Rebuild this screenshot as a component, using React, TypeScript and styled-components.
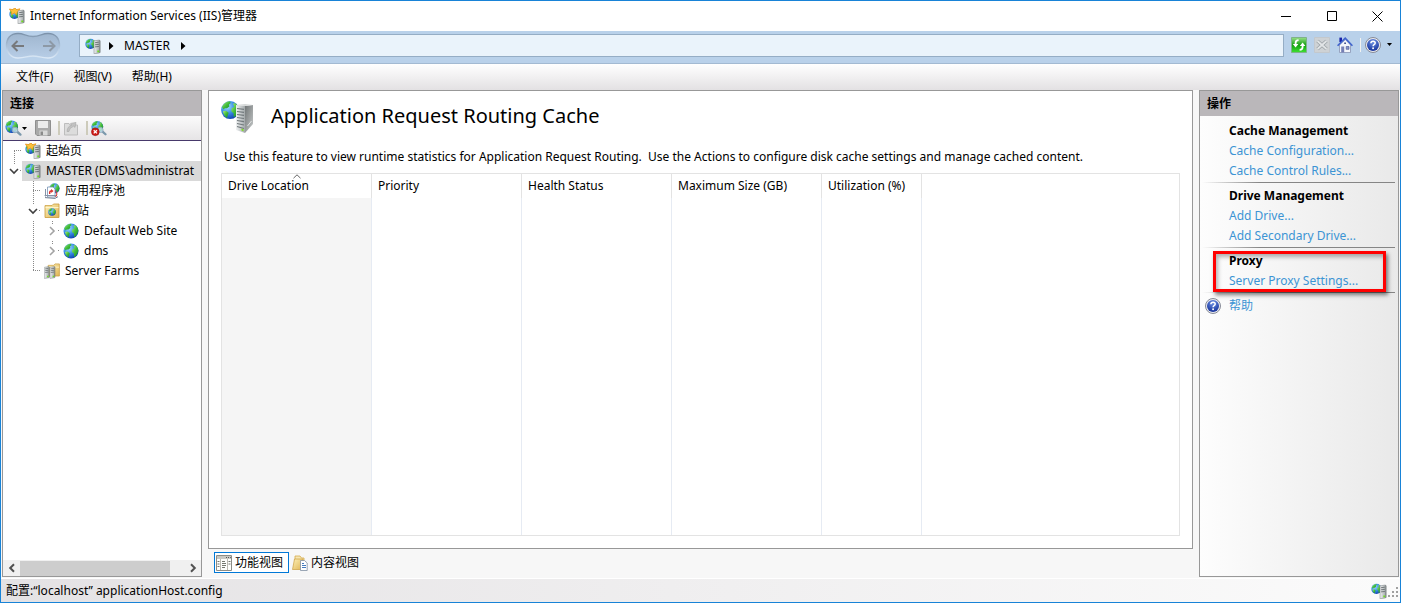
import React from "react";
import styled, { createGlobalStyle } from "styled-components";

const GlobalStyle = createGlobalStyle`
  * { box-sizing: border-box; }
  body {
    margin: 0;
    background: #f7f7f7;
    color: #000;
    font-family: "Noto Sans", "Noto Sans CJK SC", sans-serif;
    font-size: 12px;
    line-height: 20px;
  }
  button { font: inherit; color: inherit; }
`;

const Window = styled.div`
  height: 100vh;
  min-height: 400px;
  display: flex;
  flex-direction: column;
  border: 1px solid #1883d7;
  background: #f7f7f7;
  overflow: hidden;
  white-space: nowrap;
`;

const TitleBar = styled.header`
  flex: none;
  height: 30px;
  display: flex;
  align-items: center;
  gap: 5px;
  padding: 0 2px 0 8px;
  background: #fff;
`;

const WindowTitle = styled.h1`
  margin: 0;
  flex: 1;
  font-size: 12px;
  font-weight: 400;
`;

const IconButton = styled.button<{ $w?: number }>`
  display: flex;
  align-items: center;
  justify-content: center;
  flex: none;
  width: ${(p) => p.$w ?? 16}px;
  height: 24px;
  padding: 0;
  border: 0;
  background: none;
`;

const AddressBar = styled.nav`
  flex: none;
  height: 33px;
  display: flex;
  align-items: center;
  padding: 0 8px 3px 4px;
  background: #b9d1ea;
  border-bottom: 1px solid #a3bad2;
`;

const HistoryButtons = styled.div`
  position: relative;
  flex: none;
  display: flex;
  align-items: center;
  justify-content: space-between;
  width: 56px;
  height: 28px;
  padding: 0 3px;
  margin-right: 18px;
`;

const HistoryShape = styled.svg`
  position: absolute;
  inset: 0;
`;

const HistoryButton = styled(IconButton)`
  position: relative;
`;

const Breadcrumb = styled.div`
  flex: 1;
  height: 23px;
  display: flex;
  align-items: center;
  gap: 8px;
  padding-left: 5px;
  margin-right: 7px;
  border: 1px solid #95adc5;
  background: #eaf3fb;
`;

const Crumb = styled.a`
  padding: 0 3px 0 2px;
  color: #000;
  text-decoration: none;
`;

const Tools = styled.div`
  flex: none;
  display: flex;
  align-items: center;
  gap: 7px;
  padding-bottom: 2px;
`;

const HelpMenu = styled.span`
  display: flex;
  align-items: center;
  gap: 6px;
`;

const HelpGroup = styled.span`
  display: flex;
  align-items: center;
  gap: 4px;
`;

const Separator = styled.span<{ $light?: boolean }>`
  width: ${(p) => (p.$light ? 1 : 2)}px;
  height: 14px;
  background: ${(p) => (p.$light ? "#f2f2f0" : "#cdcbbb")};
`;

const MenuBar = styled.nav`
  flex: none;
  height: 26px;
  display: flex;
  align-items: center;
  gap: 20px;
  padding-left: 15px;
  background: linear-gradient(#fff, #e3e1e3);
`;

const MenuItem = styled.button`
  padding: 0;
  border: 0;
  background: none;
`;

const Body = styled.main`
  flex: 1;
  min-height: 0;
  display: grid;
  grid-template-columns: 200px minmax(0, 1fr) 200px;
  gap: 6px;
  padding: 0 1px 1px;
`;

const Pane = styled.section<{ $shaded?: boolean }>`
  display: flex;
  flex-direction: column;
  min-height: 0;
  border: 1px solid #989898;
  background: ${(p) => (p.$shaded ? "linear-gradient(90deg, #fdfdfd, #e9e9e9)" : "#fff")};
`;

const PaneHeader = styled.h2`
  flex: none;
  height: 25px;
  margin: 0;
  padding: 3px 7px 2px;
  background: #bab7ba;
  font-size: 12px;
  font-weight: 700;
`;

const TreeToolbar = styled.div`
  flex: none;
  height: 25px;
  display: flex;
  align-items: center;
  gap: 7px;
  padding-left: 1px;
  background: linear-gradient(#fbfbfb, #e6e4e6);
  border-bottom: 1px solid #48396b;
`;

const ToolCluster = styled.span`
  display: flex;
  align-items: center;
  gap: 3px;
`;

const Tree = styled.div`
  flex: 1;
  min-height: 0;
  overflow: hidden;
`;

const TreeRow = styled.div`
  display: flex;
  height: 20px;
`;

const TreeLabel = styled.span<{ $selected?: boolean }>`
  flex: 1;
  min-width: 0;
  display: flex;
  align-items: center;
  gap: 5px;
  padding-left: 3px;
  background: ${(p) => (p.$selected ? "#d9d9d9" : "none")};
  svg { flex: none; }
`;

type GuideKind = "blank" | "first" | "line" | "tee" | "end" | "node";

const dotsV = "repeating-linear-gradient(#888 0 1px, transparent 1px 2px)";
const dotsH = "repeating-linear-gradient(90deg, #888 0 1px, transparent 1px 2px)";
const guides: Record<GuideKind, string> = {
  blank: "none",
  first: `${dotsV} 11px 10px / 1px 10px no-repeat, ${dotsH} 11px 9px / 9px 1px no-repeat`,
  line: `${dotsV} 11px 0 / 1px 20px no-repeat`,
  tee: `${dotsV} 11px 0 / 1px 20px no-repeat, ${dotsH} 11px 9px / 9px 1px no-repeat`,
  end: `${dotsV} 11px 0 / 1px 10px no-repeat, ${dotsH} 11px 9px / 9px 1px no-repeat`,
  node: `${dotsV} 11px 0 / 1px 3px no-repeat, ${dotsH} 17px 9px / 2px 1px no-repeat`,
};

const Guide = styled.span<{ $kind: GuideKind }>`
  flex: none;
  display: flex;
  align-items: center;
  justify-content: center;
  width: 19px;
  height: 20px;
  padding-left: 2px;
  background: ${(p) => guides[p.$kind]};
`;

const ScrollBar = styled.div`
  flex: none;
  display: flex;
  align-items: center;
  height: 16px;
  background: #f0f0f0;
`;

const ScrollTrack = styled.div`
  flex: 1;
  padding-right: 14px;
`;

const ScrollThumb = styled.div`
  height: 15px;
  background: #cdcdcd;
`;

const Center = styled.div`
  display: flex;
  flex-direction: column;
  min-height: 0;
`;

const Feature = styled.section`
  flex: 1;
  min-height: 0;
  display: flex;
  flex-direction: column;
  padding: 8px 12px 12px;
  border: 1px solid #989898;
  background: #fff;
`;

const FeatureHead = styled.div`
  flex: none;
  display: flex;
  align-items: center;
  gap: 16px;
  height: 36px;
`;

const FeatureTitle = styled.h2`
  margin: 0;
  font-size: 20px;
  font-weight: 400;
  line-height: 28px;
  padding-bottom: 2px;
`;

const FeatureText = styled.p`
  flex: none;
  margin: 12px 0 6px 3px;
  line-height: 20px;
  white-space: pre;
`;

const TableFrame = styled.div`
  flex: 1;
  min-height: 0;
  border: 1px solid #e3e3e3;
`;

const Table = styled.table`
  width: 100%;
  height: 100%;
  table-layout: fixed;
  border-collapse: separate;
  border-spacing: 0;
`;

const HeadCell = styled.th<{ $w?: number }>`
  position: relative;
  width: ${(p) => (p.$w ? `${p.$w}px` : "auto")};
  height: 24px;
  padding: 0 6px;
  border-right: ${(p) => (p.$w ? "1px solid #e3e3e3" : "0")};
  text-align: left;
  font-weight: 400;
`;

const SortMark = styled.svg`
  position: absolute;
  top: 0;
  left: calc(50% - 4px);
`;

const BodyCell = styled.td<{ $sorted?: boolean; $last?: boolean }>`
  padding: 0;
  border-right: ${(p) => (p.$last ? "0" : "1px solid #e6ebf3")};
  background: ${(p) => (p.$sorted ? "#f5f5f5" : "#fff")};
`;

const ViewTabs = styled.div`
  flex: none;
  display: flex;
  gap: 1px;
  padding: 3px 5px 4px 6px;
`;

const ViewTab = styled.button<{ $active?: boolean }>`
  display: flex;
  align-items: center;
  gap: 3px;
  height: 21px;
  padding: 0 5px 0 1px;
  border: 1px solid ${(p) => (p.$active ? "#0078d7" : "transparent")};
  background: ${(p) => (p.$active ? "#fff" : "none")};
`;

const ActionGroups = styled.div`
  padding: 5px 3px 0 2px;
`;

const ActionGroup = styled.section`
  position: relative;
  display: flex;
  flex-direction: column;
  height: 65px;
  padding-left: 27px;
  background: linear-gradient(90deg, transparent, #858585 30%) 0 61px / 100% 1px no-repeat;
`;

const ProxyGroup = styled(ActionGroup)`
  height: 45px;
  background-position: 0 41px;
`;

const ActionTitle = styled.h3`
  margin: 0;
  font-size: 12px;
  font-weight: 700;
  line-height: 20px;
`;

const ActionLink = styled.a`
  color: #3c94d4;
  text-decoration: none;
  line-height: 20px;
`;

const Highlight = styled.span`
  position: absolute;
  inset: 0 9px 4px 11px;
  border: 3px solid #ff0000;
  box-shadow: 2px 3px 4px rgba(0, 0, 0, 0.5), inset 2px 3px 4px rgba(0, 0, 0, 0.3);
  pointer-events: none;
`;

const HelpRow = styled.div`
  display: flex;
  align-items: center;
  gap: 8px;
  padding-left: 3px;
`;

const StatusBar = styled.footer`
  flex: none;
  display: flex;
  align-items: center;
  justify-content: space-between;
  height: 24px;
  padding: 0 2px 0 5px;
  border-top: 1px solid #fff;
  background: linear-gradient(90deg, #e4e2e4, #fbfbfb);
`;

const StatusIcons = styled.div`
  display: flex;
  align-items: center;
  gap: 1px;
`;

const HiddenSvg = styled.svg`
  display: block;
  flex: none;
`;

const Defs = () => (
  <HiddenSvg width="0" height="0" aria-hidden>
    <defs>
      <radialGradient id="sea" cx="0.35" cy="0.3" r="0.75">
        <stop offset="0" stopColor="#a9e2ff" />
        <stop offset="0.5" stopColor="#3b8fe6" />
        <stop offset="1" stopColor="#0f3fae" />
      </radialGradient>
      <linearGradient id="land" x1="0" x2="1" y1="0" y2="1">
        <stop offset="0" stopColor="#b4f07e" />
        <stop offset="0.5" stopColor="#3fbb3a" />
        <stop offset="1" stopColor="#16862d" />
      </linearGradient>
      <linearGradient id="metal" x1="0" x2="1" y1="0" y2="0">
        <stop offset="0" stopColor="#f0f2f3" />
        <stop offset="1" stopColor="#a3a9ab" />
      </linearGradient>
      <linearGradient id="side" x1="0" x2="1" y1="0" y2="1">
        <stop offset="0" stopColor="#6f7475" />
        <stop offset="1" stopColor="#c9cccc" />
      </linearGradient>
      <linearGradient id="folder" x1="0" x2="1" y1="0" y2="1">
        <stop offset="0" stopColor="#fdf0b8" />
        <stop offset="1" stopColor="#dfb453" />
      </linearGradient>
      <linearGradient id="green" x1="0" x2="0" y1="0" y2="1">
        <stop offset="0" stopColor="#9be08a" />
        <stop offset="0.5" stopColor="#12a010" />
        <stop offset="1" stopColor="#3fe233" />
      </linearGradient>
      <linearGradient id="pill" x1="0" x2="0" y1="0" y2="1">
        <stop offset="0" stopColor="#9fb6cf" />
        <stop offset="1" stopColor="#b7cde6" />
      </linearGradient>
      <linearGradient id="pillEdge" x1="0" x2="0" y1="0" y2="1">
        <stop offset="0" stopColor="#7c92aa" />
        <stop offset="0.6" stopColor="#b3c9e0" />
        <stop offset="1" stopColor="#dce9f6" />
      </linearGradient>
      <radialGradient id="help" cx="0.5" cy="0.25" r="0.8">
        <stop offset="0" stopColor="#6f94e6" />
        <stop offset="1" stopColor="#0d2a94" />
      </radialGradient>
    </defs>
  </HiddenSvg>
);

const Globe = () => (
  <g>
    <circle cx="8" cy="8" r="7.5" fill="url(#sea)" />
    <path d="M1.2 5.4Q3.2 1.2 7.6 .7L8.6 2 7 3.4 7.4 5 5.4 6.4 3.6 6.4 2.6 7.6Z" fill="url(#land)" />
    <path d="M2 9 4.6 8.6 6.8 10.2 6 12.4 5.4 14.6Q2.6 13 2 9Z" fill="url(#land)" />
    <path d="M10.4 2.4 12.6 2.2Q15 4.4 15.4 7.6L14.4 10.6 12.6 13.2 11 13.8 11 10.8 9 9 9.2 6.6 11.4 5.2Z" fill="url(#land)" />
  </g>
);

const Tower = () => (
  <g>
    <path d="M0 1 6 0V15L0 16Z" fill="url(#metal)" stroke="#7c8385" strokeWidth=".6" />
    <path d="M6 0 7 .8V14.4L6 15Z" fill="#6e7476" />
    <path d="M1 3.2 5.3 2.5M1 5.6 5.3 5M1 8 5.3 7.5" stroke="#5c6467" strokeWidth=".9" />
    <path d="M3.6 12.2h2v2h-2z" fill="#6fe01c" />
  </g>
);

const GlobeServerIcon = ({ star }: { star?: boolean }) => (
  <svg width="16" height="16" viewBox="0 0 16 16">
    <g transform="translate(0 .5) scale(.68)"><Globe /></g>
    {star && (
      <path d="M.4 1 3.4 1.6 6 0 7.6 1.6 11 .8 9.6 3.2 8 4.4 7.6 6.6 5.4 5 2.6 6.6 2.4 4Z" fill="#fbc23a" stroke="#ea8f12" strokeWidth=".7" />
    )}
    <g transform="translate(9 2) scale(.92 .86)"><Tower /></g>
  </svg>
);

const FeatureIcon = () => (
  <svg width="34" height="34" viewBox="0 0 34 34">
    <g transform="translate(-.5 .5) scale(1.2)"><Globe /></g>
    <path d="M15 5 24 6V33L15 30Z" fill="url(#metal)" />
    <path d="M24 6 32 5V24L24 33Z" fill="url(#side)" />
    <path d="M15 5 24 4 32 5 24 6Z" fill="#d5d8d8" />
    <path d="M16 8.5 23 9.3M16 11.5 23 12.3M16 14.5 23 15.3M16 17.5 23 18.5M16 20.5 23 21.7M16 23.5 23 25M16 26.5 23 28.5" stroke="#71797c" strokeWidth="1.2" />
    <path d="M20.5 28.5 22.5 29.2V31.2L20.5 30.5Z" fill="#7fe021" />
    <path d="M26.5 26 30.5 21" stroke="#e2e4e4" />
  </svg>
);

const GlobeIcon = () => (
  <svg width="16" height="16" viewBox="0 0 16 16"><Globe /></svg>
);

const PoolIcon = () => (
  <svg width="16" height="16" viewBox="0 0 16 16">
    <g transform="translate(5 0) scale(.68)"><Globe /></g>
    <path d="M3.5 4H9l2 2v8H3.5Z" fill="#fff" stroke="#7793b5" strokeWidth=".8" />
    <path d="M1.5 6V13.5M.6 12.5h12" stroke="#8592a6" />
    <path d="M5 11Q4.5 7.4 7 7.2V6L9.6 8 7.2 10V8.8Q6 9 6.4 11Z" fill="#dc3530" />
    <path d="M11 7.5q2.4 1 1.8 4.5L11.5 14" fill="none" stroke="#dc3530" strokeWidth="1" />
    <path d="M1 14.6 11 15.4 14 13.6" fill="none" stroke="#707e91" />
  </svg>
);

const FolderBase = () => (
  <g>
    <path d="M1 2.6H8L9.5 1H15V14.5H1Z" fill="url(#folder)" stroke="#c99a3a" strokeWidth=".8" />
    <path d="M1.5 4.6H14.5" stroke="#fff6cf" />
  </g>
);

const SiteFolderIcon = () => (
  <svg width="16" height="16" viewBox="0 0 16 16">
    <FolderBase />
    <g transform="translate(4 5) scale(.5)"><Globe /></g>
  </svg>
);

const FarmIcon = () => (
  <svg width="16" height="16" viewBox="0 0 16 16">
    <g transform="translate(3.4 0) scale(.8 .9)"><FolderBase /></g>
    <g transform="translate(.4 3.5) scale(.75)"><Tower /></g>
    <g transform="translate(6 3.5) scale(.75)"><Tower /></g>
  </svg>
);

const ConnectIcon = ({ off }: { off?: boolean }) => (
  <svg width="17" height="17" viewBox="0 0 17 17">
    <g transform="scale(.84)"><Globe /></g>
    <path d="M12 11.5 15.4 14.6" stroke="#7b98ac" strokeWidth="2.4" strokeLinecap="round" />
    <circle cx="10" cy="10" r="2.8" fill="#cfe9f7" fillOpacity=".75" stroke="#8faabb" />
    {off && (
      <>
        <circle cx="4.6" cy="12" r="4.1" fill="#cf1a17" stroke="#94100f" strokeWidth=".6" />
        <path d="M2.9 10.3 6.3 13.7M6.3 10.3 2.9 13.7" stroke="#fff" strokeWidth="1.4" />
      </>
    )}
  </svg>
);

const SaveIcon = () => (
  <svg width="16" height="16" viewBox="0 0 16 16">
    <path d="M.5 .5H15.5V15.5H2L.5 14Z" fill="#a9a9a9" stroke="#8f8f8f" />
    <path d="M3 1H13V8H3Z" fill="#ebebeb" />
    <path d="M4.5 10.5H12.5V15.5H4.5Z" fill="#d9d9d9" />
    <path d="M5.5 11.5H8V15H5.5Z" fill="#8a8a8a" />
  </svg>
);

const UpIcon = () => (
  <svg width="16" height="16" viewBox="0 0 16 16">
    <path d="M1.5 3.5H6L7 5H14.5V15H1.5Z" fill="#dcdcdc" stroke="#bdbdbd" />
    <path d="M4 11.5Q4.5 6 8.5 5.4L7.6 3.4 13 2.4 12 7.4 10.6 6.2Q6 8 6 11.5Z" fill="#c2c2c2" stroke="#a6a6a6" strokeWidth=".6" />
  </svg>
);

const RefreshIcon = () => (
  <svg width="16" height="16" viewBox="0 0 16 16">
    <path d="M.5 .5H15.5V15.5H.5Z" fill="url(#green)" stroke="#7fb38a" />
    <path d="M7.6 3.2Q4.6 3.2 4.6 6V7.5M8.6 12.8Q11.6 12.8 11.6 10V8.5" fill="none" stroke="#fff" strokeWidth="1.8" />
    <path d="M1.8 7H7.4L4.6 10.4ZM8.8 9H14.4L11.6 5.6Z" fill="#fff" />
  </svg>
);

const StopIcon = () => (
  <svg width="16" height="16" viewBox="0 0 16 16">
    <path d="M.5 .5H15.5V15.5H.5Z" fill="#ced2d5" stroke="#c3c8cd" />
    <path d="M3.5 4 12.5 12M12.5 4 3.5 12" stroke="#9aa1a6" strokeWidth="3.4" />
    <path d="M3.5 4 12.5 12M12.5 4 3.5 12" stroke="#e2e5e7" strokeWidth="1.8" />
  </svg>
);

const HomeIcon = () => (
  <svg width="16" height="16" viewBox="0 0 16 16">
    <path d="M2.4 .6H5V5H2.4Z" fill="#1923a8" />
    <path d="M2.5 8 8.4 2.6 13.5 8V15.5H2.5Z" fill="#f4f6fb" stroke="#8894b4" strokeWidth=".8" />
    <path d="M.6 8.8 8.2 1.2 15.4 8.8" fill="none" stroke="#3f62cc" strokeWidth="1.6" />
    <path d="M4.2 9.5H7.2V15.5H4.2Z" fill="#7580b5" />
    <path d="M9.2 9.5H12V12.3H9.2Z" fill="#8693c9" stroke="#47558f" strokeWidth=".6" />
    <path d="M7.2 5.5H9V7H7.2Z" fill="#47558f" />
  </svg>
);

const HelpIcon = () => (
  <svg width="16" height="16" viewBox="0 0 16 16">
    <circle cx="8" cy="8" r="7.5" fill="#e9eaf0" stroke="#878b97" strokeWidth="1" />
    <circle cx="8" cy="8" r="6" fill="url(#help)" />
    <path d="M5.9 6.3Q5.9 4.2 8.1 4.2 10.2 4.2 10.2 6 10.2 7.1 9.1 7.7 8.1 8.3 8.1 9.3" fill="none" stroke="#fff" strokeWidth="1.5" />
    <circle cx="8.1" cy="11.3" r=".95" fill="#fff" />
  </svg>
);

const FeaturesViewIcon = () => (
  <svg width="16" height="16" viewBox="0 0 16 16">
    <path d="M.5 .5H15.5V15.5H.5Z" fill="#fdfdfb" stroke="#8c8c86" />
    <path d="M1 1H15V4H1Z" fill="#c9c8c2" />
    <path d="M10 2.5h1M12 2.5h1M14 2.5h.8" stroke="#555" />
    <path d="M4.5 4V15M11.5 4V15" stroke="#bbb9b1" />
    <path d="M1.5 6.5h2M1.5 9h2M1.5 11.5h2M12.5 6.5h2M12.5 9h2M6 6.5h3M6 8.5h4M6 10.5h4M6 12.5h3" stroke="#74776f" strokeWidth="1" />
  </svg>
);

const ContentViewIcon = () => (
  <svg width="16" height="16" viewBox="0 0 16 16">
    <path d="M3 1H8L9.5 3H12V13H3Z" fill="#f6e6b2" stroke="#d5ab4c" strokeWidth=".8" />
    <path d="M.5 14.5 2.5 4H11L9.5 14.5Z" fill="url(#folder)" stroke="#cb9d3f" strokeWidth=".7" />
    <path d="M8.5 5.5H12.5L15.2 8V15.5H8.5Z" fill="#fff" stroke="#8190a3" strokeWidth=".8" />
    <path d="M10 8.5h2M10 10.5h4M10 12.5h4" stroke="#467bbd" />
  </svg>
);

const CaretRight = () => (
  <svg width="5" height="8" viewBox="0 0 5 8"><path d="M0 0 4.5 4 0 8Z" fill="#000" /></svg>
);

const CaretDown = () => (
  <svg width="5" height="3" viewBox="0 0 5 3"><path d="M0 0H5L2.5 3Z" fill="#000" /></svg>
);

const Chevron = ({ open }: { open?: boolean }) => (
  <svg width="10" height="10" viewBox="0 0 10 10" fill="none" strokeWidth="1.6">
    {open ? <path d="M1 3 5 7 9 3" stroke="#404040" /> : <path d="M3 1 7 5 3 9" stroke="#a3a3a3" />}
  </svg>
);

const ScrollArrow = ({ flip }: { flip?: boolean }) => (
  <svg width="8" height="10" viewBox="0 0 8 10" fill="none" stroke="#505050" strokeWidth="2">
    <path d={flip ? "M2 1.2 5.8 5 2 8.8" : "M6 1.2 2.2 5 6 8.8"} />
  </svg>
);

const HistoryArrow = ({ forward }: { forward?: boolean }) => (
  <svg width="13" height="12" viewBox="0 0 13 12" fill="none" stroke={forward ? "#8d99a6" : "#77797c"} strokeWidth="2">
    <path d={forward ? "M0 6H11.5M6.5 1 11.5 6 6.5 11" : "M13 6H1.5M6.5 1 1.5 6 6.5 11"} />
  </svg>
);

interface TreeNode {
  label: string;
  icon: React.ReactNode;
  guides: GuideKind[];
  open?: boolean;
  selected?: boolean;
}

const nodes: TreeNode[] = [
  { label: "起始页", icon: <GlobeServerIcon star />, guides: ["first"] },
  { label: "MASTER (DMS\\administrat", icon: <GlobeServerIcon />, guides: ["node"], open: true, selected: true },
  { label: "应用程序池", icon: <PoolIcon />, guides: ["blank", "tee"] },
  { label: "网站", icon: <SiteFolderIcon />, guides: ["blank", "node"], open: true },
  { label: "Default Web Site", icon: <GlobeIcon />, guides: ["blank", "line", "node"], open: false },
  { label: "dms", icon: <GlobeIcon />, guides: ["blank", "line", "node"], open: false },
  { label: "Server Farms", icon: <FarmIcon />, guides: ["blank", "end"] },
];

const columns = [
  { label: "Drive Location", w: 150 },
  { label: "Priority", w: 150 },
  { label: "Health Status", w: 150 },
  { label: "Maximum Size (GB)", w: 150 },
  { label: "Utilization (%)", w: 100 },
];

const groups = [
  { title: "Cache Management", links: ["Cache Configuration...", "Cache Control Rules..."] },
  { title: "Drive Management", links: ["Add Drive...", "Add Secondary Drive..."] },
];

export default function App() {
  return (
    <Window>
      <GlobalStyle />
      <Defs />
      <TitleBar>
        <GlobeServerIcon star />
        <WindowTitle>Internet Information Services (IIS)管理器</WindowTitle>
        <IconButton $w={41} aria-label="Minimize">
          <svg width="10" height="10"><path d="M0 5.5H10" stroke="#000" /></svg>
        </IconButton>
        <IconButton $w={41} aria-label="Maximize">
          <svg width="10" height="10"><path d="M.5 .5H9.5V9.5H.5Z" fill="none" stroke="#000" /></svg>
        </IconButton>
        <IconButton $w={41} aria-label="Close">
          <svg width="11" height="11"><path d="M.5 .5 10.5 10.5M10.5 .5 .5 10.5" stroke="#000" /></svg>
        </IconButton>
      </TitleBar>

      <AddressBar>
        <HistoryButtons>
          <HistoryShape width="56" height="28" viewBox="0 0 56 28">
            <path
              d="M13 1.5C19 1.5 21 4.5 28 4.5S37 1.5 43 1.5C51 1.5 54.5 7 54.5 13.5S50 26 43 26C36 26 34 24 28 24S20 26 13 26C6 26 1.5 20 1.5 13.5S5 1.5 13 1.5Z"
              fill="url(#pill)"
              stroke="url(#pillEdge)"
              strokeWidth="1.4"
            />
          </HistoryShape>
          <HistoryButton $w={18} aria-label="Back"><HistoryArrow /></HistoryButton>
          <HistoryButton $w={18} aria-label="Forward"><HistoryArrow forward /></HistoryButton>
        </HistoryButtons>
        <Breadcrumb>
          <GlobeServerIcon />
          <CaretRight />
          <Crumb href="#master">MASTER</Crumb>
          <CaretRight />
        </Breadcrumb>
        <Tools>
          <IconButton aria-label="Refresh"><RefreshIcon /></IconButton>
          <IconButton aria-label="Stop"><StopIcon /></IconButton>
          <IconButton aria-label="Home"><HomeIcon /></IconButton>
          <HelpGroup>
            <Separator $light />
            <IconButton $w={27} aria-label="Help">
              <HelpMenu><HelpIcon /><CaretDown /></HelpMenu>
            </IconButton>
          </HelpGroup>
        </Tools>
      </AddressBar>

      <MenuBar>
        <MenuItem>文件(F)</MenuItem>
        <MenuItem>视图(V)</MenuItem>
        <MenuItem>帮助(H)</MenuItem>
      </MenuBar>

      <Body>
        <Pane>
          <PaneHeader>连接</PaneHeader>
          <TreeToolbar>
            <IconButton $w={24} aria-label="Connect"><ConnectIcon /><CaretDown /></IconButton>
            <IconButton aria-label="Save"><SaveIcon /></IconButton>
            <ToolCluster>
              <Separator />
              <IconButton aria-label="Up"><UpIcon /></IconButton>
            </ToolCluster>
            <ToolCluster>
              <Separator />
              <IconButton aria-label="Disconnect"><ConnectIcon off /></IconButton>
            </ToolCluster>
          </TreeToolbar>
          <Tree role="tree">
            {nodes.map((n) => (
              <TreeRow key={n.label} role="treeitem">
                {n.guides.map((g, i) => (
                  <Guide key={i} $kind={g}>
                    {g === "node" && <Chevron open={n.open} />}
                  </Guide>
                ))}
                <TreeLabel $selected={n.selected}>
                  {n.icon}
                  {n.label}
                </TreeLabel>
              </TreeRow>
            ))}
          </Tree>
          <ScrollBar>
            <IconButton $w={17} aria-label="Scroll left"><ScrollArrow /></IconButton>
            <ScrollTrack><ScrollThumb /></ScrollTrack>
            <IconButton $w={17} aria-label="Scroll right"><ScrollArrow flip /></IconButton>
          </ScrollBar>
        </Pane>

        <Center>
          <Feature>
            <FeatureHead>
              <FeatureIcon />
              <FeatureTitle>Application Request Routing Cache</FeatureTitle>
            </FeatureHead>
            <FeatureText>
              {"Use this feature to view runtime statistics for Application Request Routing.  Use the Actions to configure disk cache settings and manage cached content."}
            </FeatureText>
            <TableFrame>
              <Table>
                <thead>
                  <tr>
                    {columns.map((c, i) => (
                      <HeadCell key={c.label} $w={c.w} scope="col">
                        {c.label}
                        {i === 0 && (
                          <SortMark width="8" height="5" viewBox="0 0 8 5">
                            <path d="M.5 4.2 4 .8 7.5 4.2" fill="none" stroke="#666" />
                          </SortMark>
                        )}
                      </HeadCell>
                    ))}
                    <HeadCell />
                  </tr>
                </thead>
                <tbody>
                  <tr>
                    {columns.map((c, i) => (
                      <BodyCell key={c.label} $sorted={i === 0} />
                    ))}
                    <BodyCell $last />
                  </tr>
                </tbody>
              </Table>
            </TableFrame>
          </Feature>
          <ViewTabs>
            <ViewTab $active><FeaturesViewIcon />功能视图</ViewTab>
            <ViewTab><ContentViewIcon />内容视图</ViewTab>
          </ViewTabs>
        </Center>

        <Pane $shaded>
          <PaneHeader>操作</PaneHeader>
          <ActionGroups>
            {groups.map((g) => (
              <ActionGroup key={g.title}>
                <ActionTitle>{g.title}</ActionTitle>
                {g.links.map((l) => (
                  <ActionLink key={l} href="#action">{l}</ActionLink>
                ))}
              </ActionGroup>
            ))}
            <ProxyGroup>
              <ActionTitle>Proxy</ActionTitle>
              <ActionLink href="#action">Server Proxy Settings...</ActionLink>
              <Highlight />
            </ProxyGroup>
            <HelpRow>
              <HelpIcon />
              <ActionLink href="#help">帮助</ActionLink>
            </HelpRow>
          </ActionGroups>
        </Pane>
      </Body>

      <StatusBar>
        <span>配置:“localhost” applicationHost.config</span>
        <StatusIcons>
          <GlobeServerIcon />
          <svg width="10" height="14" viewBox="0 0 10 14" fill="#a0a0a0">
            <path d="M8 3h2v2H8zM4 7h2v2H4zM8 7h2v2H8zM0 11h2v2H0zM4 11h2v2H4zM8 11h2v2H8z" />
          </svg>
        </StatusIcons>
      </StatusBar>
    </Window>
  );
}
